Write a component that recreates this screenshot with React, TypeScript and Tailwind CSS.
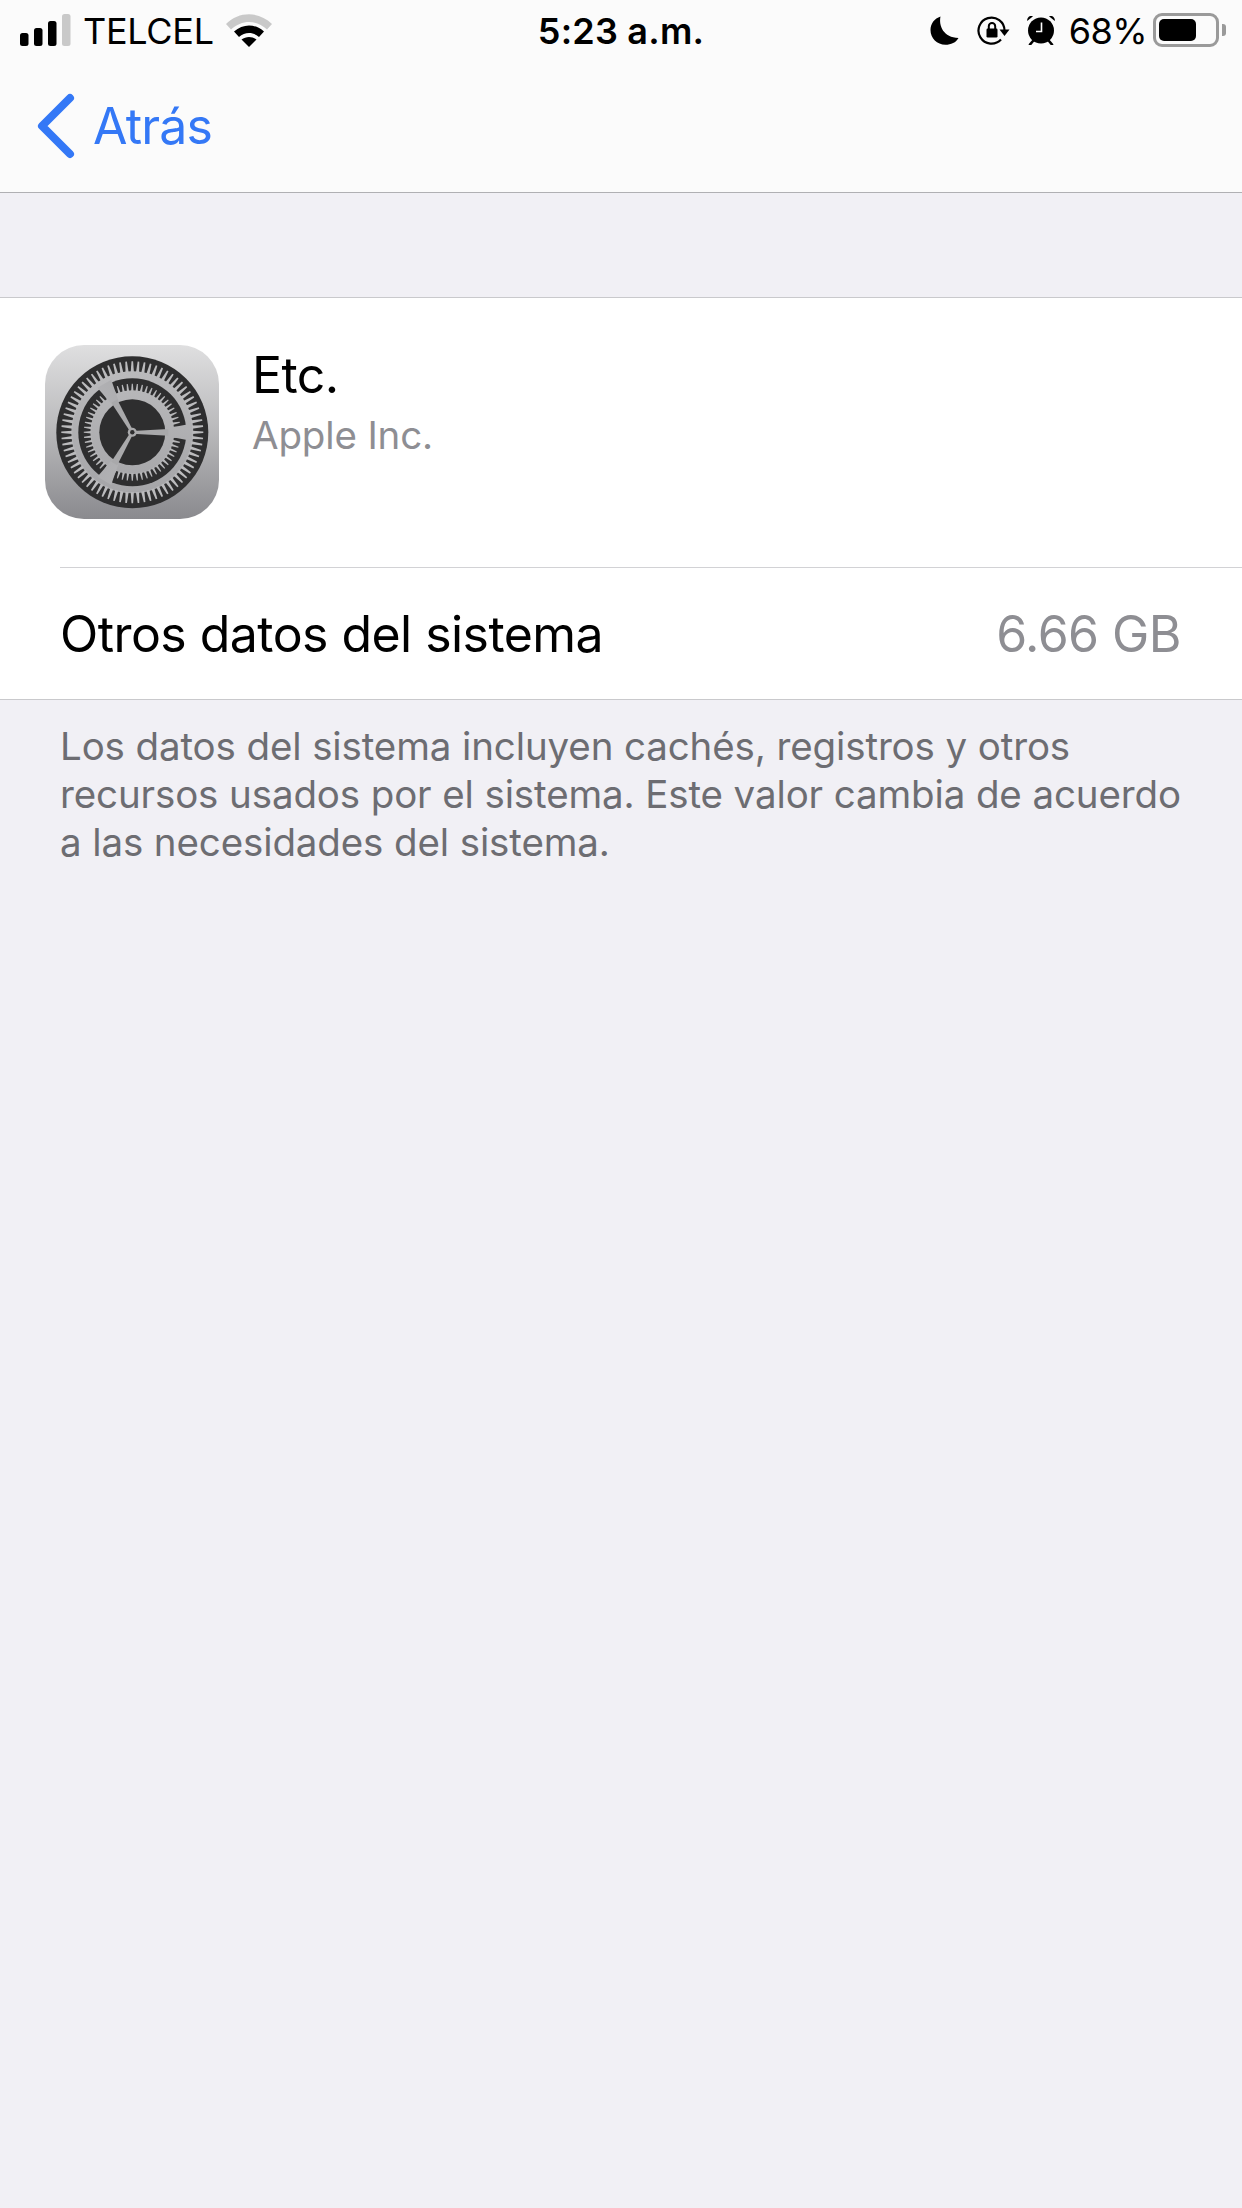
const font = { fontFamily: 'Inter, "Noto Sans", sans-serif' };

function Gear() {
  const c = 87.3;
  const wedge = (n: number, r1: number, r2: number, w1: number, w2: number) =>
    Array.from({ length: n }, (_, i) => (
      <polygon
        key={i}
        points={`${c - w1 / 2},${c - r1} ${c + w1 / 2},${c - r1} ${c + w2 / 2},${c - r2} ${c - w2 / 2},${c - r2}`}
        transform={`rotate(${(i * 360) / n} ${c} ${c})`}
        fill="url(#metal)"
      />
    ));
  const angles = [0, 120, 240];
  return (
    <svg width="174" height="174" viewBox="0 0 174 174" className="shrink-0 block">
      <defs>
        <linearGradient id="bgG" x1="0" y1="0" x2="0" y2="1">
          <stop offset="0" stopColor="#dfdfe0" />
          <stop offset="0.5" stopColor="#b8b8ba" />
          <stop offset="1" stopColor="#8a8a8e" />
        </linearGradient>
        <linearGradient id="metal" gradientUnits="userSpaceOnUse" x1="0" y1="10" x2="0" y2="165">
          <stop offset="0" stopColor="#bdbdbf" />
          <stop offset="1" stopColor="#a2a2a5" />
        </linearGradient>
      </defs>
      <rect width="174" height="174" rx="39" fill="url(#bgG)" />
      <circle cx={c} cy={c} r="76" fill="#2e2e2f" />
      <circle cx={c} cy={c} r="61" fill="url(#metal)" />
      {wedge(72, 60, 71, 3.2, 1.6)}
      <circle cx={c} cy={c} r="54" fill="#2e2e2f" />
      <circle cx={c} cy={c} r="42" fill="url(#metal)" />
      {wedge(60, 41, 48.5, 2.4, 1.1)}
      {angles.map((a) => (
        <polygon
          key={a}
          points={`${c + 30},${c - 3} ${c + 56},${c - 8} ${c + 56},${c + 8} ${c + 30},${c + 3}`}
          fill="url(#metal)"
          transform={`rotate(${a} ${c} ${c})`}
        />
      ))}
      <circle cx={c} cy={c} r="33" fill="#2e2e2f" />
      {angles.map((a) => (
        <polygon
          key={a}
          points={`${c},${c - 1.4} ${c + 36},${c - 3.4} ${c + 36},${c + 3.4} ${c},${c + 1.4}`}
          fill="#a9a9ab"
          transform={`rotate(${a} ${c} ${c})`}
        />
      ))}
      <circle cx={c} cy={c} r="4.5" fill="#a9a9ab" />
      <circle cx={c} cy={c} r="2.2" fill="#2e2e2f" />
    </svg>
  );
}

function Signal() {
  return (
    <svg width="52" height="33" viewBox="0 0 52 33" className="block shrink-0">
      <rect x="0" y="19" width="8.5" height="13" rx="2.5" fill="#000" />
      <rect x="14" y="14" width="8.5" height="18" rx="2.5" fill="#000" />
      <rect x="28" y="7" width="8.5" height="25" rx="2.5" fill="#000" />
      <rect x="42" y="0" width="8.5" height="32" rx="2.5" fill="#c9c9c9" />
    </svg>
  );
}

function Wifi() {
  return (
    <svg width="46" height="33" viewBox="0 0 46 33" className="block shrink-0">
      <path d="M0 10 C13 -3 33 -3 46 10 L41 15.5 C30 5.5 16 5.5 5 15.5 Z" fill="#c9c9c9" />
      <path d="M8 17.5 C17 9.5 29 9.5 38 17.5 L33 23 C27 17.8 19 17.8 13 23 Z" fill="#000" />
      <path d="M15.5 25.5 C20 22 26 22 30.5 25.5 L23 33 Z" fill="#000" />
    </svg>
  );
}

function Moon() {
  return (
    <svg width="29" height="29" viewBox="0 0 29 29" className="block shrink-0">
      <path d="M10.5 0.5 C8.5 10 13.5 21.5 28.5 22 C26 26.5 21 28.8 15.5 28.8 C7 28.8 0.5 22 0.5 14 C0.5 7.5 4.5 2.5 10.5 0.5 Z" fill="#000" />
    </svg>
  );
}

function RotationLock() {
  return (
    <svg width="33" height="29" viewBox="0 0 33 29" className="block shrink-0">
      <path d="M27.5 14.5 A13 13 0 1 0 24 23.5" fill="none" stroke="#000" strokeWidth="2.2" />
      <path d="M22.5 13.5 H32.5 L27.5 20 Z" fill="#000" />
      <rect x="9.5" y="12.5" width="11" height="9" rx="1.2" fill="#000" />
      <path d="M11.8 13 V10.3 A3.2 3.2 0 0 1 18.2 10.3 V13" fill="none" stroke="#000" strokeWidth="2" />
    </svg>
  );
}

function Alarm() {
  return (
    <svg width="30" height="30" viewBox="0 0 30 30" className="block shrink-0">
      <circle cx="15" cy="15.5" r="13" fill="#000" />
      <path d="M1.2 6 C0.8 2.5 3.5 0.2 7 1.2 Z" fill="#000" />
      <path d="M28.8 6 C29.2 2.5 26.5 0.2 23 1.2 Z" fill="#000" />
      <path d="M7 26 L4 29.5" stroke="#000" strokeWidth="2.6" strokeLinecap="round" />
      <path d="M23 26 L26 29.5" stroke="#000" strokeWidth="2.6" strokeLinecap="round" />
      <path d="M15.5 7.5 V16.5 H10" fill="none" stroke="#fff" strokeWidth="1.6" />
    </svg>
  );
}

function Battery() {
  return (
    <div className="flex items-center shrink-0">
      <div className="w-[66px] h-[34px] rounded-[9px] border-[3px] border-[#9a9a9a] p-[3px] box-border">
        <div className="w-[37px] h-[22px] rounded-[5px] bg-black" />
      </div>
      <div className="w-[4px] h-[12px] ml-[3px] rounded-r-[3px] bg-[#9a9a9a]" />
    </div>
  );
}

function Chevron() {
  return (
    <svg width="38" height="66" viewBox="0 0 38 66" className="block shrink-0">
      <path d="M33 5 L5 33 L33 61" fill="none" stroke="#3478f6" strokeWidth="8" strokeLinecap="round" strokeLinejoin="round" />
    </svg>
  );
}

export default function App() {
  return (
    <div style={font} className="w-[1242px] h-[2208px] bg-[#f1f0f5] flex flex-col overflow-hidden antialiased">
      <header className="h-[193px] bg-[#fbfbfb] border-b border-[#b0b0b3] flex flex-col shrink-0">
        <div className="h-[60px] flex items-center pl-[20px] pr-[16px] text-black">
          <div className="flex-1 flex items-center">
            <Signal />
            <span className="ml-[11px] mt-[2px] text-[36px] leading-[40px] tracking-[-0.3px]">TELCEL</span>
            <div className="ml-[12px]"><Wifi /></div>
          </div>
          <span className="mt-[2px] mr-[4px] text-[36px] leading-[40px] font-semibold tracking-[0.2px]">5:23 a.m.</span>
          <div className="flex-1 flex items-center justify-end">
            <Moon />
            <div className="ml-[18px]"><RotationLock /></div>
            <div className="ml-[16px]"><Alarm /></div>
            <span className="ml-[13px] mt-[2px] text-[36px] leading-[40px] tracking-[-0.6px]">68%</span>
            <div className="ml-[6px]"><Battery /></div>
          </div>
        </div>
        <div className="flex-1 flex items-center pl-[37px]">
          <Chevron />
          <span className="ml-[18px] text-[50px] leading-[60px] text-[#3478f6] tracking-[-0.8px]">Atrás</span>
        </div>
      </header>

      <div className="h-[104px] shrink-0" />

      <section className="bg-white border-y border-[#c9c9cc] shrink-0">
        <div className="flex pl-[45px] pt-[47px] pb-[48px]">
          <Gear />
          <div className="ml-[33px]">
            <div className="text-[50px] leading-[60px] text-black tracking-[-0.55px]">Etc.</div>
            <div className="mt-[2px] text-[38.5px] leading-[56px] text-[#8e8e93] tracking-[-0.15px]">Apple Inc.</div>
          </div>
        </div>
        <div className="ml-[60px] border-t border-[#d2d2d5] h-[132px] flex items-center justify-between pr-[61px]">
          <span className="text-[50px] leading-[60px] text-black tracking-[-0.55px]">Otros datos del sistema</span>
          <span className="text-[50px] leading-[60px] text-[#8e8e93] tracking-[-0.55px]">6.66 GB</span>
        </div>
      </section>

      <p className="pl-[60px] pr-[40px] pt-[22px] text-[38.5px] leading-[48px] text-[#6d6d72] tracking-[-0.12px]">
        Los datos del sistema incluyen cachés, registros y otros
        <br />
        recursos usados por el sistema. Este valor cambia de acuerdo
        <br />
        a las necesidades del sistema.
      </p>
    </div>
  );
}
